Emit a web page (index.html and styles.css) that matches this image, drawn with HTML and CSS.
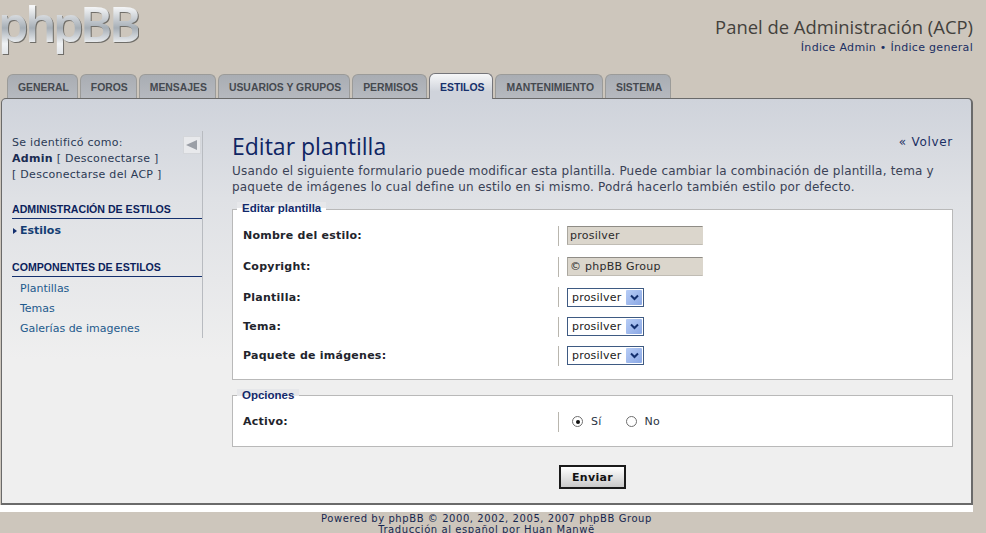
FILE: index.html
```html
<!DOCTYPE html>
<html lang="es">
<head>
<meta charset="utf-8">
<title>Editar plantilla</title>
<link rel="stylesheet" href="styles.css">
</head>
<body>
<header class="top">
  <div class="logo">phpBB</div>
  <div class="top-right">
    <h1 class="acp-title">Panel de Administración (ACP)</h1>
    <p class="top-links">Índice Admin • Índice general</p>
  </div>
</header>
<nav class="tabs">
  <a class="tab">GENERAL</a>
  <a class="tab">FOROS</a>
  <a class="tab">MENSAJES</a>
  <a class="tab">USUARIOS Y GRUPOS</a>
  <a class="tab">PERMISOS</a>
  <a class="tab active">ESTILOS</a>
  <a class="tab">MANTENIMIENTO</a>
  <a class="tab">SISTEMA</a>
</nav>
<div class="panel">
  <aside class="side">
    <div class="identity">
      <p>Se identificó como:</p>
      <p><b>Admin</b> [ Desconectarse ]</p>
      <p>[ Desconectarse del ACP ]</p>
    </div>
    <span class="collapse"><svg width="12" height="10" viewBox="0 0 12 10"><path d="M0 5 11 0V10Z" fill="#9a9ea6"/></svg></span>
    <h3 class="side-head">ADMINISTRACIÓN DE ESTILOS</h3>
    <ul class="side-list">
      <li class="current">Estilos</li>
    </ul>
    <h3 class="side-head second">COMPONENTES DE ESTILOS</h3>
    <ul class="side-list">
      <li>Plantillas</li>
      <li>Temas</li>
      <li>Galerías de imagenes</li>
    </ul>
  </aside>
  <main class="main">
    <a class="back">« Volver</a>
    <h2 class="page-title">Editar plantilla</h2>
    <p class="intro">Usando el siguiente formulario puede modificar esta plantilla. Puede cambiar la combinación de plantilla, tema y paquete de imágenes lo cual define un estilo en si mismo. Podrá hacerlo también estilo por defecto.</p>
    <fieldset class="box first">
      <legend>Editar plantilla</legend>
      <div class="row h31"><label>Nombre del estilo:</label><div class="ctl"><span class="ro">prosilver</span></div></div>
      <div class="row h31"><label>Copyright:</label><div class="ctl"><span class="ro">© phpBB Group</span></div></div>
      <div class="row h30"><label>Plantilla:</label><div class="ctl"><span class="sel">prosilver<i class="arrow"><svg width="9" height="7" viewBox="0 0 9 7"><path d="M1 1.5 4.5 5 8 1.5" fill="none" stroke="#14306e" stroke-width="2"/></svg></i></span></div></div>
      <div class="row h29"><label>Tema:</label><div class="ctl"><span class="sel">prosilver<i class="arrow"><svg width="9" height="7" viewBox="0 0 9 7"><path d="M1 1.5 4.5 5 8 1.5" fill="none" stroke="#14306e" stroke-width="2"/></svg></i></span></div></div>
      <div class="row h29"><label>Paquete de imágenes:</label><div class="ctl"><span class="sel">prosilver<i class="arrow"><svg width="9" height="7" viewBox="0 0 9 7"><path d="M1 1.5 4.5 5 8 1.5" fill="none" stroke="#14306e" stroke-width="2"/></svg></i></span></div></div>
    </fieldset>
    <fieldset class="box second">
      <legend>Opciones</legend>
      <div class="row h31"><label>Activo:</label><div class="ctl radios">
        <span class="radio on"></span><span class="r-label">Sí</span>
        <span class="radio"></span><span class="r-label">No</span>
      </div></div>
    </fieldset>
    <div class="submit"><button class="send" type="button">Enviar</button></div>
  </main>
</div>
<div class="strip"></div>
<footer class="foot">
  <p>Powered by phpBB © 2000, 2002, 2005, 2007 phpBB Group</p>
  <p>Traducción al español por Huan Manwë</p>
</footer>
</body>
</html>
```
FILE: styles.css
```css
* { box-sizing: border-box; }
html, body { height: 533px; overflow: hidden; }
body {
  margin: 0;
  background: #cdc6bc;
  font-family: "DejaVu Sans", Verdana, sans-serif;
  font-size: 11px;
  color: #2b3a55;
}
p, h1, h2, h3, ul { margin: 0; padding: 0; }

.top { height: 74px; display: flex; justify-content: space-between; }
.logo {
  font-family: "Noto Sans", "DejaVu Sans", sans-serif;
  font-size: 49px;
  line-height: 46px;
  height: 56px;
  margin-left: -2px;
  letter-spacing: -3.5px;
  font-weight: 600;
  background: linear-gradient(180deg, #f6f7f8 12%, #a6aeb6 50%, #f0f2f4 78%, #dfe2e5 100%);
  -webkit-background-clip: text;
  background-clip: text;
  color: transparent;
  filter: drop-shadow(1px 1px 0 #6f6d68);
}
.top-right { text-align: right; padding: 15px 13px 0 0; }
.acp-title { font-family: "Open Sans", sans-serif; font-size: 18.4px; font-weight: 400; line-height: 23px; color: #43413c; }
.top-links { font-size: 11px; line-height: 14px; margin-top: 3px; color: #1b2f63; letter-spacing: .3px; }

.tabs { display: flex; height: 24px; padding-left: 7px; gap: 2px; align-items: flex-end; }
.tab {
  height: 24px;
  padding: 0 8px 0 10px;
  line-height: 25px;
  font-family: "Liberation Sans", Arial, sans-serif;
  font-size: 10.4px;
  font-weight: 700;
  color: #45494f;
  background: linear-gradient(180deg, #a9adb3, #b6b9bf);
  border: 1px solid #9b9b99;
  border-bottom: 0;
  border-radius: 6px 6px 0 0;
}
.tab.active {
  height: 26px;
  position: relative;
  z-index: 1;
  margin-bottom: -1px;
  line-height: 27px;
  color: #16306b;
  background: linear-gradient(180deg, #f6f7f8, #cfd3db 70%);
  border-color: #75757a;
}

.panel {
  display: flex;
  width: 972px;
  height: 407px;
  margin-left: 1px;
  border: solid #6a6a6a;
  border-width: 1px 2px 2px 1px;
  border-radius: 5px 5px 0 0;
  background: linear-gradient(180deg, #cfd3db 0, #dfe1e5 100px, #efefef 260px);
}

.side {
  position: relative;
  width: 191px;
  height: 207px;
  margin: 32px 0 0 10px;
  padding-top: 4px;
  flex: none;
  border-right: 1px solid #b8bbc0;
}
.identity { height: 68px; line-height: 16px; letter-spacing: .28px; }
.identity p { white-space: nowrap; }
.identity b { color: #1b2b52; }
.collapse {
  position: absolute; right: 1px; top: 5px; width: 18px; height: 18px;
  background: #e8e9ec; border: 1px solid #d4d6da; display: flex; align-items: center; justify-content: center;
}
.side-head {
  font-family: "Liberation Sans", Arial, sans-serif;
  font-size: 10.6px;
  font-weight: 700;
  color: #0c1f5c;
  line-height: 13px;
  padding-bottom: 2px;
  border-bottom: 1px solid #14306e;
}
.side-head.second { margin-top: 20px; }
.side-list { list-style: none; padding-top: 2px; }
.side-list li { padding-left: 8px; height: 20px; line-height: 20px; color: #1e5a8c; position: relative; }
.side-list li.current { font-weight: 700; color: #143d73; }
.side-list li.current::before {
  content: "";
  position: absolute; left: 1px; top: 7px;
  border-left: 4px solid #14306e; border-top: 3px solid transparent; border-bottom: 3px solid transparent;
}

.main { position: relative; flex: 1; min-width: 0; padding: 33px 18px 0 29px; }
.page-title { font-family: "Open Sans", sans-serif; font-size: 23px; font-weight: 400; line-height: 28px; color: #0f2563; }
.back { position: absolute; right: 18px; top: 35px; font-size: 12px; line-height: 16px; color: #1b2f63; letter-spacing: .7px; }
.intro { font-size: 12px; line-height: 16px; color: #3a4256; margin-top: 3px; height: 46px; width: 712px; letter-spacing: .2px; }

.box { margin: 0; padding: 0; background: #fff; border: 1px solid #b9b9b9; position: relative; min-width: 0; }
.box legend { position: absolute; top: -8px; left: 4px; padding: 0 5px; height: 13px; font-family: "Liberation Sans", Arial, sans-serif; font-size: 11.5px; font-weight: 700; line-height: 13px; color: #12296b; background: linear-gradient(180deg, #e6e7ea 50%, #fff 50%); }
.box.second legend { top: -7px; }
.box.first { height: 171px; padding-top: 10px; }
.box.second { height: 52px; margin-top: 15px; padding-top: 10px; }
.row { display: flex; align-items: center; }
.h31 { height: 31px; }
.h30 { height: 30px; }
.h29 { height: 29px; }
.row label { width: 325px; padding-left: 10px; font-weight: 700; color: #22242c; font-size: 11px; letter-spacing: .25px; }
.ctl { display: flex; align-items: center; height: 20px; border-left: 1px solid #b9b6ae; padding-left: 8px; }
.ro { width: 136px; height: 19px; background: #dbd6cc; border: 1px solid; border-color: #8f8c86 #dbd6cc #c0bcb4 #aaa79f; line-height: 18px; padding-left: 2px; color: #2c2c2c; letter-spacing: .25px; }
.sel { width: 77px; height: 19px; background: #fff; border: 1px solid #3e5a82; line-height: 17px; padding-left: 4px; color: #222; display: flex; justify-content: space-between; letter-spacing: .2px; }
.arrow { width: 16px; height: 15px; margin: 1px 1px 0 0; background: linear-gradient(135deg, #b7cdf6, #8aa7e4); display: flex; align-items: center; justify-content: center; border-radius: 1px; }
.radios { padding-left: 13px; }
.radio { width: 11px; height: 11px; border-radius: 50%; border: 1px solid #6e6e6e; background: #fff; display: inline-block; position: relative; }
.radio.on::after { content: ""; position: absolute; left: 2.5px; top: 2.5px; width: 4px; height: 4px; border-radius: 50%; background: #111; }
.r-label { margin: 0 24px 0 8px; color: #2c3444; letter-spacing: .25px; }

.submit { display: flex; justify-content: center; padding-top: 18px; }
.send { width: 67px; height: 24px; padding: 0; font-family: "DejaVu Sans", sans-serif; font-size: 11px; font-weight: 700; color: #111; background: linear-gradient(180deg, #fff, #c9c9c9); border: 2px solid #1a1a1a; letter-spacing: .3px; }

.strip { height: 7px; width: 973px; background: #fff; }
.foot { width: 973px; text-align: center; font-size: 10px; line-height: 11px; color: #17264f; letter-spacing: .57px; padding-top: 1px; white-space: nowrap; }
```
